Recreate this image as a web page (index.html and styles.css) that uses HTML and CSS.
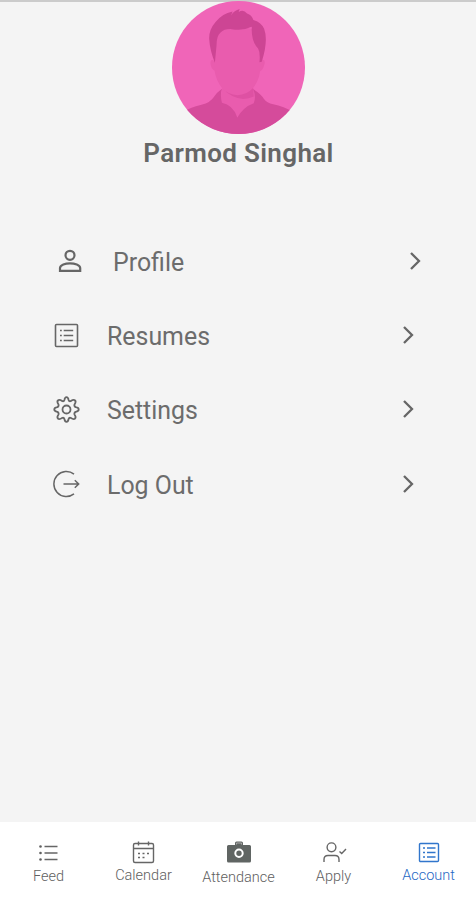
FILE: index.html
```html
<!DOCTYPE html>
<html lang="en">
<head>
<meta charset="utf-8">
<title>Account</title>
<link rel="stylesheet" href="styles.css">
</head>
<body>
<main class="screen">
  <header class="hero">
    <svg class="avatar" viewBox="38 3 397 397">
      <defs><clipPath id="disc"><circle cx="236.500" cy="201.500" r="198.500"/></clipPath></defs>
      <g clip-path="url(#disc)">
        <rect x="38" y="3" width="397" height="397" fill="#f065b8"/>
        <path fill="#e95cae" d="M168 100Q235 60 305 100L302 180Q318 174 314 192Q310 209 301 213Q297 242 280 263L290 310L236 350L180 310L187 263Q169 238 165 211Q154 205 153 190Q152 174 166 182Z"/>
        <path fill="#de51a3" d="M187 263Q205 283 234 284Q262 283 280 263L282 288Q234 311 187 263Z"/>
        <path fill="#d54b9b" d="M70 336Q91 321 126 313Q153 306 164 288Q172 276 187 265Q181 282 187 307Q220 313 233 351Q251 319 282 308Q290 291 280 266Q304 280 312 295Q321 308 340 311Q371 316 402 336V402H70Z"/>
        <path fill="#cd4594" d="M166 187Q151 151 149 116Q148 89 168 66Q187 40 219 34L214 46Q224 31 240 27L237 36Q251 27 262 40Q276 44 281 60Q304 66 313 86Q326 121 306 184L299 186Q302 157 295 145Q274 123 276 80Q249 93 216 87Q194 86 183 97Q171 106 171 135Z"/>
      </g>
    </svg>
    <h1 class="name">Parmod Singhal</h1>
  </header>

  <ul class="menu">
    <li class="row row-inset">
      <svg class="icon" viewBox="0 0 28 28"><circle cx="14" cy="8.300" r="4.500"/><path d="M4 23.800V21.100C4 17.900 9.500 16.400 14 16.400S24.200 17.900 24.200 21.100V23.800Z"/></svg>
      <span class="label">Profile</span>
      <svg class="chevron" viewBox="0 0 14 22"><path d="M2 3L10 11L2 19"/></svg>
    </li>
    <li class="row">
      <svg class="icon" viewBox="0 0 28 28"><g stroke-width="1.600"><rect x="3.500" y="3.500" width="22" height="22" rx="1"/><path d="M8 9.500h1.800M11.700 9.500h9.500M8 14.500h1.800M11.700 14.500h9.500M8 19.500h1.800M11.700 19.500h9.500"/></g></svg>
      <span class="label">Resumes</span>
      <svg class="chevron" viewBox="0 0 14 22"><path d="M2 3L10 11L2 19"/></svg>
    </li>
    <li class="row">
      <svg class="icon" viewBox="-0.500 -0.500 28 28"><g stroke-width="1.800" stroke-linejoin="round"><path d="M14 1.700Q15.600 1.700 16.100 4.500Q16.500 6 18 5.700Q21.200 3.600 22.400 4.800Q24 6.200 22 9Q21.500 11 23.200 11.700Q26.200 12.200 26.200 14Q26.200 15.800 23.200 16.300Q21.500 17 22 19Q24 21.800 22.400 23.200Q21.200 24.400 18 22.300Q16.500 22 16.100 23.500Q15.600 26.300 14 26.300Q12.400 26.300 11.900 23.500Q11.500 22 10 22.300Q6.800 24.400 5.600 23.200Q4 21.800 6 19Q6.500 17 4.800 16.300Q1.800 15.800 1.800 14Q1.800 12.200 4.800 11.700Q6.500 11 6 9Q4 6.200 5.600 4.800Q6.800 3.600 10 5.700Q11.500 6 11.900 4.500Q12.400 1.700 14 1.700Z"/><circle cx="14" cy="14" r="4"/></g></svg>
      <span class="label">Settings</span>
      <svg class="chevron" viewBox="0 0 14 22"><path d="M2 3L10 11L2 19"/></svg>
    </li>
    <li class="row">
      <svg class="icon" viewBox="-0.500 0 28 28"><g stroke-width="1.500"><path d="M21.500 4.100A12.500 12.500 0 1 0 21.500 23.900M11 14H26M22.300 10.200L26.200 14L22.300 17.800"/></g></svg>
      <span class="label">Log Out</span>
      <svg class="chevron" viewBox="0 0 14 22"><path d="M2 3L10 11L2 19"/></svg>
    </li>
  </ul>

  <nav class="tabs">
    <a class="tab">
      <svg class="tab-icon" viewBox="0 0 26 26"><path d="M8.500 6.500H21.500M8.500 13H21.500M8.500 19.500H21.500"/><g fill="#606060" stroke="none"><circle cx="4.500" cy="6.500" r="1.300"/><circle cx="4.500" cy="13" r="1.300"/><circle cx="4.500" cy="19.500" r="1.300"/></g></svg>
      <span class="caption">Feed</span>
    </a>
    <a class="tab">
      <svg class="tab-icon" viewBox="0 0 26 26"><rect x="2.500" y="3.500" width="20" height="19" rx="1.500"/><path d="M2.500 8.500H22.500M7.500 1.500V5.500M17.500 1.500V5.500"/><path d="M7 13.500h2M11.500 13.500h2M16 13.500h2M7 17.500h2M11.500 17.500h2"/></svg>
      <span class="caption raised">Calendar</span>
    </a>
    <a class="tab">
      <svg class="tab-icon" viewBox="0 0 26 26"><path fill="#606563" stroke="none" d="M2.500 5H9V3Q9 1.500 10.500 1.500H15.500Q17 1.500 17 3V5H23.500Q25 5 25 6.500V21Q25 22.500 23.500 22.500H2.500Q1 22.500 1 21V6.500Q1 5 2.500 5Z"/><path stroke="#aaa" stroke-width="1" d="M10.500 4.500V3H15.500V4.500"/><circle cx="13" cy="13.300" r="3.700" stroke="#fff" stroke-width="2"/></svg>
      <span class="caption lowered">Attendance</span>
    </a>
    <a class="tab">
      <svg class="tab-icon" viewBox="0 0 26 26"><circle cx="10.500" cy="7.300" r="4.400"/><path d="M3 22V19.500Q3 15.500 7 15.500H14Q18 15.500 18 19.500V22M18.500 11.500L20.700 13.500L25 9"/></svg>
      <span class="caption">Apply</span>
    </a>
    <a class="tab active">
      <svg class="tab-icon" viewBox="0 0 26 26"><rect x="3.500" y="3.500" width="19" height="18" rx="1"/><path d="M7 8h2M11 8h8.500M7 12.500h2M11 12.500h8.500M7 17h2M11 17h8.500"/></svg>
      <span class="caption raised">Account</span>
    </a>
  </nav>
</main>
</body>
</html>
```
FILE: styles.css
```css
* { box-sizing: border-box; }
body { margin: 0; font-family: Roboto, "Liberation Sans", sans-serif; color: #666; }
.screen {
  height: 900px;
  display: flex;
  flex-direction: column;
  background: #f4f4f4;
  border-top: 2px solid #cbcbcb;
}
.hero {
  display: flex;
  flex-direction: column;
  align-items: center;
  height: 222px;
}
.avatar { width: 133px; height: 133px; margin-top: -1px; margin-left: 1px; flex: none; }
.name { margin: 3px 0 0 1px; font-size: 26px; line-height: 32px; font-weight: 600; letter-spacing: 0.350px; color: #666; }
.menu { list-style: none; margin: 0; padding: 0 60px 0 52px; flex: 1; }
.row { display: flex; align-items: center; height: 74.200px; }
.row-inset { padding-left: 4px; margin-right: -7px; }
.icon { width: 28px; height: 28px; fill: none; stroke: #666; stroke-width: 2.200; flex: none; }
.label { flex: 1; margin-left: 27px; padding-top: 4px; font-size: 24.900px; line-height: 30px; font-weight: 400; color: #6c6c6c; }
.row-inset .label { margin-left: 29px; }
.chevron { width: 14px; height: 22px; fill: none; stroke: #666; stroke-width: 2.300; }
.tabs { display: flex; height: 78px; background: #fff; padding: 18px 0 0 1px; }
.tab { flex: 1 1 0; min-width: 0; display: flex; flex-direction: column; align-items: center; }
.tab-icon { width: 26px; height: 26px; fill: none; stroke: #666; stroke-width: 1.400; overflow: visible; }
.caption { font-size: 14.500px; line-height: 18px; margin-top: 2px; font-weight: 300; color: #606060; }
.raised { margin-top: 1px; }
.lowered { margin-top: 3px; }
.active .tab-icon { stroke: #3176cc; }
.active .caption { color: #1f68c4; }
```
